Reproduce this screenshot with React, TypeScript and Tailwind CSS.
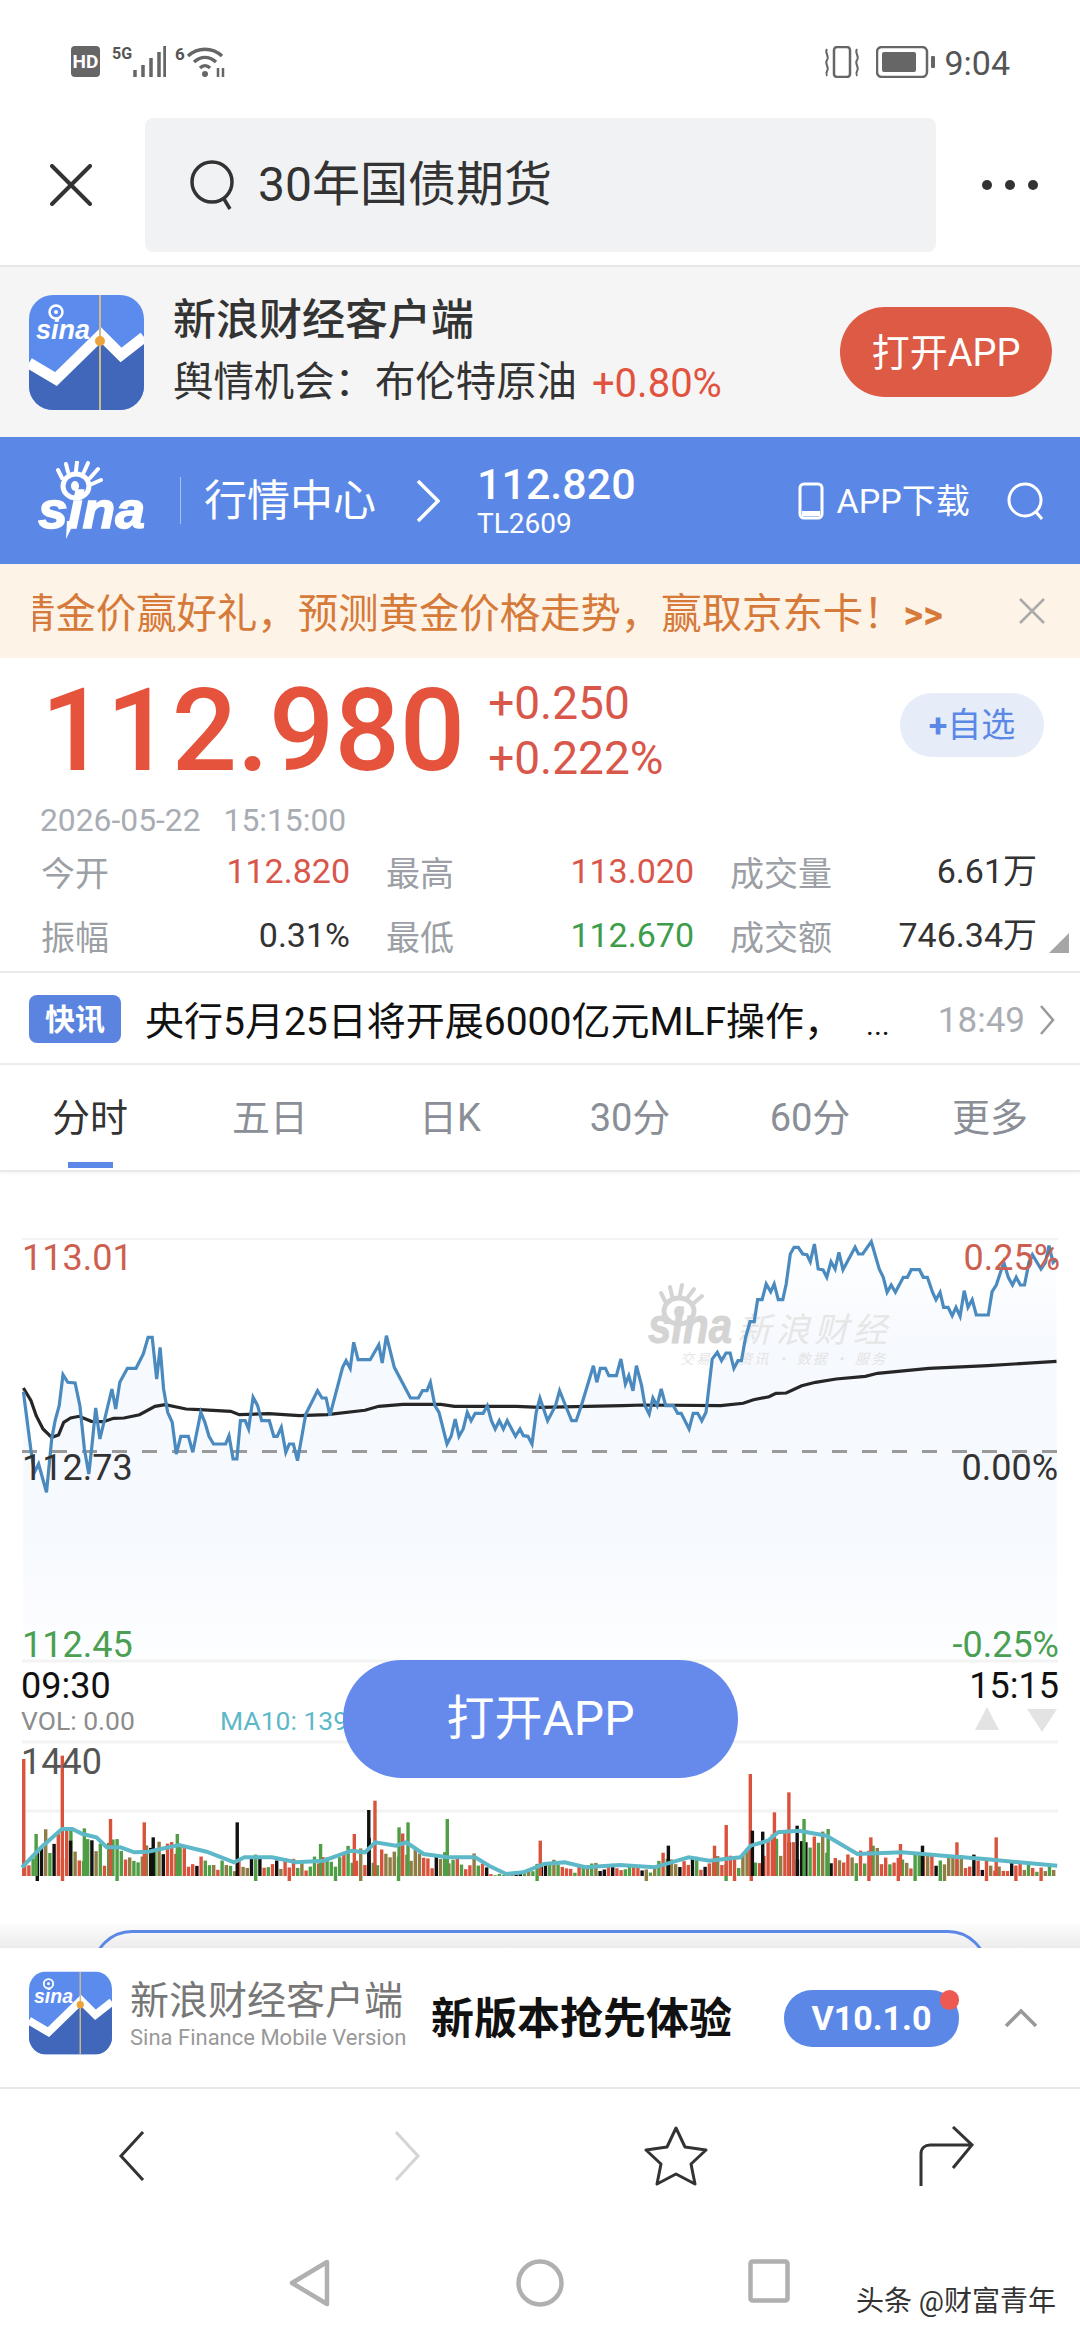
import React from "react";

const font = "font-['Roboto','Noto_Sans_CJK_SC',sans-serif]";

// chart points were read off zoomed crops: x scale 2.904, y scale 3
const leftPts = [68,548,90,725,100,790,112,765,135,850,150,690,160,635,172,590,183,497,197,520,218,522,232,590,245,720,258,795,268,700,278,597,290,690,325,540,336,600,348,520,370,478,395,478,416,435,430,385,442,385,455,510,465,415,475,540,487,610,500,640,512,735,525,682,547,682,560,730,583,610,595,640,607,682,620,705,655,705,665,680,677,750,688,750,698,635,712,635,722,660,735,565,748,590,760,635,782,635,795,682,805,682,817,655,830,730,840,705,852,705,864,755,888,615,922,545,935,567,947,567,958,620,995,475,1005,455,1017,478,1027,400,1040,452,1075,452,1100,407,1110,462,1122,380,1145,475,1192,567,1215,567,1227,545,1240,545,1250,520,1263,590,1275,610,1298,705,1310,682,1322,630,1333,682,1345,660,1357,610,1368,635,1380,613,1403,613,1415,590,1427,635,1438,660,1450,635,1462,660,1473,635,1497,682,1510,660,1520,680,1533,682,1545,705,1557,610,1568,567];
const rightPts = [22,635,45,590,57,545,78,600,92,635,105,635,120,590,155,470,165,520,175,478,190,478,200,500,222,500,235,450,248,525,258,500,270,545,280,470,295,530,305,590,317,615,328,567,340,590,352,540,365,590,387,590,400,613,410,613,433,660,445,613,458,613,470,635,482,610,500,450,515,430,527,455,540,432,552,432,563,478,575,455,585,455,597,385,610,338,622,338,632,272,645,272,657,225,670,248,680,225,692,272,705,272,715,225,727,135,738,115,750,115,763,135,775,137,785,158,797,105,808,180,822,183,833,205,845,158,857,180,868,130,880,182,915,115,925,135,937,135,962,98,985,180,997,205,1008,250,1020,228,1032,250,1055,205,1067,205,1078,182,1102,182,1113,205,1125,205,1140,250,1150,272,1162,250,1172,295,1185,295,1197,320,1208,295,1220,322,1232,245,1243,295,1255,272,1267,318,1302,318,1313,248,1325,228,1347,160,1360,205,1372,228,1383,205,1395,228,1407,228,1420,160,1430,137,1455,180,1468,160,1478,110,1490,160,1500,150];
const avgLeft = [68,537,90,575,105,620,125,660,150,685,170,678,185,640,205,627,230,622,265,637,300,638,330,628,360,627,405,617,450,592,480,587,540,600,580,602,670,607,695,617,780,614,870,620,950,617,1060,604,1100,592,1170,586,1280,586,1320,592,1500,592,1568,595];
const avgRight = [240,590,300,588,525,590,590,583,620,572,665,563,685,553,715,552,760,530,800,520,860,510,945,502,980,493,1130,478,1300,470,1500,457];
const maPts = [32,1165,60,1105,90,1050,105,1050,120,1065,140,1075,155,1105,175,1105,195,1120,215,1118,260,1098,300,1118,340,1150,355,1135,395,1135,430,1150,470,1145,510,1115,530,1120,545,1090,575,1100,590,1090,615,1125,650,1135,690,1135,710,1160,735,1185,760,1180,790,1155,820,1150,850,1165,900,1158,950,1165,1000,1135,1030,1145,1075,1135,1090,1100,1115,1085,1130,1060,1160,1055,1200,1070,1245,1125,1310,1120,1370,1130,1430,1140,1480,1150,1535,1160];
const tallBars: [number, number, string][] = [[32,840,"r"],[88,830,"r"],[158,1020,"r"],[207,1030,"r"],[220,1075,"k"],[255,1065,"g"],[342,1030,"k"],[533,993,"k"],[542,965,"r"],[590,1030,"g"],[577,1045,"g"],[647,1020,"g"],[463,1095,"g"],[512,1065,"r"],[782,1085,"r"],[968,1100,"k"],[1035,1100,"r"],[1052,1038,"r"],[1087,885,"r"],[1090,1055,"k"],[1105,1058,"k"],[1122,1000,"r"],[1143,940,"r"],[1155,1040,"k"],[1165,1020,"g"],[1200,1050,"g"],[1262,1075,"r"],[1305,1095,"r"],[1337,1100,"k"],[1387,1090,"r"],[1444,1075,"r"],[50,1065,"g"],[120,1048,"g"],[100,1085,"k"]];

const toPairs = (a: number[], fx: (n: number) => number, fy: (n: number) => number) => {
  const out: [number, number][] = [];
  for (let i = 0; i < a.length; i += 2) out.push([fx(a[i]), fy(a[i + 1])]);
  return out;
};
const lx = (n: number) => n / 2.904;
const rx = (n: number) => 540 + n / 2.904;
const cy = (n: number) => 1210 + n / 3;
const zx = (n: number) => n / 1.452;
const zy = (n: number) => 1480 + n / 3;

const price = [...toPairs(leftPts, lx, cy), ...toPairs(rightPts, rx, cy)];
const avg = [...toPairs(avgLeft, lx, cy), ...toPairs(avgRight, rx, cy)];
const ma = toPairs(maPts, zx, zy);
const line = (p: [number, number][]) => p.map((q) => q[0].toFixed(1) + "," + q[1].toFixed(1)).join(" ");

const colors: Record<string, string> = { r: "#d9533c", g: "#4f9d45", k: "#111111", o: "#8f7d45" };

const maAt = (x: number) => {
  for (let i = 1; i < ma.length; i++) {
    if (x <= ma[i][0]) return ma[i][1];
  }
  return 1877;
};

// small fixed random so the volume bars stay the same every run
let seed = 77;
const rnd = () => {
  seed = (seed * 16807) % 2147483647;
  return seed / 2147483647;
};
const bars: { x: number; top: number; c: string; bottom: number }[] = [];
for (let x = 23; x < 1054; x += 4.2) {
  const pick = rnd();
  const c = pick < 0.42 ? "r" : pick < 0.7 ? "g" : pick < 0.88 ? "o" : "k";
  const h = (1877 - maAt(x)) * (0.35 + rnd() * 0.95);
  bars.push({ x, top: 1877 - h, c, bottom: rnd() > 0.93 ? 1882 : 1877 });
}
tallBars.forEach((b) => bars.push({ x: zx(b[0]), top: zy(b[1]), c: b[2], bottom: 1877 }));

function AppIcon({ className }: { className: string }) {
  return (
    <svg viewBox="0 0 115 115" className={className}>
      <defs>
        <clipPath id="iconclip">
          <rect width="115" height="115" rx="24" />
        </clipPath>
      </defs>
      <g clipPath="url(#iconclip)">
        <rect width="115" height="115" fill="#5c8bee" />
        <path d="M0 74 L27 90 L72 46 L92 66 L115 48 L115 115 L0 115 Z" fill="#4067ba" />
        <path d="M0 68 L27 84 L72 40 L92 60 L115 42" fill="none" stroke="#ffffff" strokeWidth="11" />
        <rect x="70" width="2" height="115" fill="#cdbb8a" />
        <circle cx="71" cy="46" r="5" fill="#eda33b" />
        <text x="7" y="44" fill="#ffffff" fontSize="27" fontWeight="700" fontStyle="italic" fontFamily="Liberation Sans, sans-serif">sina</text>
        <circle cx="27" cy="17" r="6.5" fill="none" stroke="#ffffff" strokeWidth="2.5" />
        <circle cx="27" cy="17" r="2" fill="#ffffff" />
      </g>
    </svg>
  );
}

function SinaMark({ fill, className }: { fill: string; className: string }) {
  return (
    <svg viewBox="0 0 107 80" className={className}>
      <ellipse cx="38" cy="25" rx="13" ry="12" fill="none" stroke={fill} strokeWidth="5" />
      <ellipse cx="37" cy="25" rx="4" ry="5" fill={fill} />
      <path d="M24 17 L20 9 M30 11 L28 3 M38 10 L39 1 M46 11 L50 2 M52 17 L60 8 M54 23 L63 19" stroke={fill} strokeWidth="4" strokeLinecap="round" />
      <text x="0" y="67" fill={fill} stroke={fill} strokeWidth="1.5" fontSize="52" fontWeight="700" fontStyle="italic" fontFamily="Liberation Sans, sans-serif" textLength="107" lengthAdjust="spacingAndGlyphs">sina</text>
      <path d="M29 60 L28 78 L37 60 Z" fill={fill} />
    </svg>
  );
}

const Stat = ({ label, value, color }: { label: string; value: string; color: string }) => (
  <div className="flex items-center justify-between h-[64px]">
    <span className="text-[34px] text-[#9c9fa5] leading-none">{label}</span>
    <span className={`text-[34px] leading-none -translate-y-[3px] ${color}`}>{value}</span>
  </div>
);

const tabs = ["分时", "五日", "日K", "30分", "60分", "更多"];

export default function App() {
  return (
    <div className={`${font} w-[1080px] h-[2340px] bg-white flex flex-col overflow-hidden`}>
      {/* status bar */}
      <div className="h-[118px] flex items-start justify-between pt-[46px] pl-[71px] pr-[70px]">
        <div className="flex items-start">
          <div className="w-[29px] h-[31px] rounded-[4px] bg-[#666] text-white text-[19px] font-bold leading-[31px] text-center">HD</div>
          <span className="ml-[12px] text-[16px] font-bold text-[#555] leading-none">5G</span>
          <svg viewBox="0 0 34 32" className="w-[34px] h-[32px]">
            <path d="M3 31V24M11 31V19M19 31V12M27 31V6M33 31V0" stroke="#666" strokeWidth="3.5" />
          </svg>
          <span className="ml-[9px] text-[17px] font-bold text-[#555] leading-none">6</span>
          <svg viewBox="0 0 42 32" className="w-[42px] h-[32px]">
            <path d="M3 10C13 1 27 1 37 10M9 16C16 10 24 10 31 16M15 22C18 19 22 19 25 22" fill="none" stroke="#666" strokeWidth="3.5" />
            <circle cx="20" cy="28" r="3" fill="#666" />
            <path d="M33 22V31M38 22V31" stroke="#666" strokeWidth="2.5" />
          </svg>
        </div>
        <div className="flex items-start">
          <svg viewBox="0 0 38 32" className="w-[38px] h-[32px]">
            <rect x="11" y="1" width="16" height="30" rx="3" fill="none" stroke="#666" strokeWidth="2.5" />
            <path d="M4 3C1 7 7 10 4 14C1 18 7 21 4 25C3 27 3 28 4 30M34 3C31 7 37 10 34 14C31 18 37 21 34 25C33 27 33 28 34 30" fill="none" stroke="#666" strokeWidth="2" />
          </svg>
          <svg viewBox="0 0 60 32" className="ml-[15px] w-[60px] h-[32px]">
            <rect x="1" y="1" width="50" height="30" rx="5" fill="none" stroke="#666" strokeWidth="2.5" />
            <rect x="6" y="6" width="34" height="20" rx="2" fill="#666" />
            <rect x="55" y="10" width="4" height="12" rx="1" fill="#666" />
          </svg>
          <span className="ml-[8px] text-[34px] text-[#555] leading-[34px]">9:04</span>
        </div>
      </div>

      {/* browser search bar */}
      <div className="h-[149px] border-b-2 border-[#e6e6e6] flex pt-0">
        <div className="w-[145px] h-[134px] flex items-center pl-[50px]">
          <svg viewBox="0 0 42 42" className="w-[42px] h-[42px]">
            <path d="M2 2L40 40M40 2L2 40" stroke="#333" strokeWidth="4" strokeLinecap="round" />
          </svg>
        </div>
        <div className="w-[791px] h-[134px] rounded-[8px] bg-[#f1f2f4] flex items-center pl-[44px]">
          <svg viewBox="0 0 48 52" className="w-[48px] h-[52px]">
            <circle cx="23" cy="23" r="20" fill="none" stroke="#333" strokeWidth="3.5" />
            <path d="M35 40L41 50" stroke="#333" strokeWidth="3.5" />
          </svg>
          <span className="ml-[21px] text-[48px] text-[#333] leading-none">30年国债期货</span>
        </div>
        <div className="flex-1 h-[134px] flex items-center justify-center gap-[13px] pl-[3px] pb-[1px]">
          <span className="w-[10px] h-[10px] rounded-full bg-[#333]" />
          <span className="w-[10px] h-[10px] rounded-full bg-[#333]" />
          <span className="w-[10px] h-[10px] rounded-full bg-[#333]" />
        </div>
      </div>

      {/* app banner */}
      <div className="h-[170px] bg-[#f5f5f5] flex items-center pl-[29px] pr-[28px]">
        <AppIcon className="w-[115px] h-[115px]" />
        <div className="ml-[29px] flex flex-col -mt-[4px]">
          <span className="text-[43px] font-medium text-[#333] leading-[50px]">新浪财经客户端</span>
          <div className="flex items-center mt-[17px] h-[44px]">
            <span className="text-[40.4px] text-[#333] leading-none">舆情机会：布伦特原油</span>
            <span className="ml-[15px] text-[40px] text-[#e2533f] leading-none">+0.80%</span>
          </div>
        </div>
        <div className="ml-auto w-[212px] h-[90px] rounded-[45px] bg-[#dd5a44] text-white text-[38px] flex items-center justify-center pt-[3px]">打开APP</div>
      </div>

      {/* sina header */}
      <div className="h-[127px] bg-[#5b88e6] flex items-center text-white">
        <SinaMark fill="#ffffff" className="ml-[38px] w-[107px] h-[80px]" />
        <div className="ml-[35px] w-[1px] h-[47px] bg-[#a9c1f0]" />
        <span className="ml-[23px] text-[43px] leading-none mt-[2px]">行情中心</span>
        <svg viewBox="0 0 24 44" className="ml-[40px] w-[24px] h-[44px]">
          <path d="M2 2L22 22L2 42" fill="none" stroke="#fff" strokeWidth="3.5" />
        </svg>
        <div className="ml-[37px] flex flex-col">
          <span className="text-[43px] font-medium leading-[44px]">112.820</span>
          <span className="text-[28px] leading-[30px] mt-[3px]">TL2609</span>
        </div>
        <svg viewBox="0 0 26 38" className="ml-[162px] w-[26px] h-[38px]">
          <rect x="2" y="2" width="22" height="34" rx="4" fill="none" stroke="#fff" strokeWidth="3" />
          <path d="M4 29H22V34H4Z" fill="#fff" />
        </svg>
        <span className="ml-[13px] text-[34px] leading-none">APP下载</span>
        <svg viewBox="0 0 40 40" className="ml-[36px] w-[40px] h-[40px]">
          <circle cx="19" cy="19" r="16" fill="none" stroke="#fff" strokeWidth="3" />
          <path d="M30 31L36 38" stroke="#fff" strokeWidth="3" />
        </svg>
      </div>

      {/* notice strip */}
      <div className="h-[94px] bg-[#fdf3e7] flex items-center">
        <div className="ml-[33px] w-[915px] h-[60px] pt-[14px] overflow-hidden">
          <div className="-ml-[18px] flex items-center whitespace-nowrap text-[40.4px] leading-none text-[#d67a3a]">
            <span>猜金价赢好礼，预测黄金价格走势，赢取京东卡！</span>
            <span className="text-[38px] font-bold">&gt;&gt;</span>
          </div>
        </div>
        <svg viewBox="0 0 28 28" className="ml-[70px] w-[28px] h-[28px]">
          <path d="M2 2L26 26M26 2L2 26" stroke="#aaa" strokeWidth="2.5" />
        </svg>
      </div>

      {/* quote */}
      <div className="relative h-[315px] flex flex-col border-b-2 border-[#e9e9e9]">
        <div className="h-[133px] flex items-start pl-[41px] pr-[36px]">
          <span className="text-[115px] font-medium text-[#e5533d] leading-[114px] mt-[16px]">112.980</span>
          <div className="ml-[23px] mt-[22px] flex flex-col text-[#d9574a] leading-none">
            <span className="text-[46px]">+0.250</span>
            <span className="text-[46px] mt-[9px]">+0.222%</span>
          </div>
          <div className="ml-auto mt-[35px] w-[144px] h-[64px] rounded-[32px] bg-[#e6edf9] text-[#5b88e6] text-[34px] flex items-center justify-center">
            <b className="font-bold">+</b>自选
          </div>
        </div>
        <div className="mt-[12px] pl-[40px] flex gap-[23px] text-[31.8px] leading-[34px] text-[#a8acb3]">
          <span>2026-05-22</span>
          <span>15:15:00</span>
        </div>
        <div className="mt-[5px] pl-[41px] grid grid-cols-[309px_308px_307px] gap-x-[36px]">
          <Stat label="今开" value="112.820" color="text-[#d9574a]" />
          <Stat label="最高" value="113.020" color="text-[#d9574a]" />
          <Stat label="成交量" value="6.61万" color="text-[#333]" />
          <Stat label="振幅" value="0.31%" color="text-[#333]" />
          <Stat label="最低" value="112.670" color="text-[#3e9d4b]" />
          <Stat label="成交额" value="746.34万" color="text-[#333]" />
        </div>
        <svg viewBox="0 0 20 20" className="absolute right-[11px] bottom-[18px] w-[20px] h-[20px]">
          <path d="M20 0V20H0Z" fill="#a6a6a6" />
        </svg>
      </div>

      {/* news line */}
      <div className="h-[92px] border-b-2 border-[#ececec] flex items-center pl-[29px] pr-[25px] pt-[4px]">
        <div className="w-[92px] h-[48px] -mt-[2px] rounded-[8px] bg-[#5b84e0] text-white text-[30px] font-bold flex items-center justify-center">快讯</div>
        <span className="ml-[24px] mt-[4px] text-[39px] text-[#111] leading-none whitespace-nowrap">央行5月25日将开展6000亿元MLF操作，</span>
        <span className="ml-[23px] text-[30px] text-[#111] leading-none mt-[10px]">...</span>
        <span className="ml-auto text-[35px] text-[#a9adb3] leading-none">18:49</span>
        <svg viewBox="0 0 16 32" className="ml-[14px] w-[16px] h-[32px]">
          <path d="M2 2L14 16L2 30" fill="none" stroke="#999" strokeWidth="2.5" />
        </svg>
      </div>

      {/* period tabs */}
      <div className="h-[107px] grid grid-cols-6 border-b-2 border-[#e9e9e9] shadow-[0_2px_4px_rgba(0,0,0,0.04)]">
        {tabs.map((t, i) => (
          <div key={t} className="relative flex items-center justify-center">
            <span className={`text-[38px] leading-none mt-[1px] ${i === 0 ? "text-[#333]" : "text-[#8a8e96]"}`}>{t}</span>
            {i === 0 && <div className="absolute bottom-[2px] left-[68px] w-[45px] h-[6px] bg-[#5b88e6]" />}
          </div>
        ))}
      </div>

      {/* chart canvas */}
      <div className="relative flex-1 overflow-hidden">
        <svg viewBox="0 1173 1080 775" className="absolute left-0 top-0 w-[1080px] h-[775px]">
          <defs>
            <linearGradient id="area" x1="0" y1="0" x2="0" y2="1">
              <stop offset="0" stopColor="#ffffff" />
              <stop offset="0.25" stopColor="#f6f9fe" />
              <stop offset="0.7" stopColor="#f6f9fe" />
              <stop offset="1" stopColor="#fdfeff" />
            </linearGradient>
          </defs>
          <path d="M22 1240H1058" stroke="#f3f3f3" strokeWidth="2" />
          <polygon points={`${line(price)} 1057,1662 23,1662`} fill="url(#area)" />
          <path d="M22 1662H1058M22 1743H1058M22 1812H1058" stroke="#f3f3f3" strokeWidth="3" />
          <path d="M22 1452.5H1058" stroke="#9a9a9a" strokeWidth="3" strokeDasharray="15 15" />
          <SinaWatermark />
          <polyline points={line(avg)} fill="none" stroke="#262626" strokeWidth="3.2" />
          <polyline points={line(price)} fill="none" stroke="#4a8abf" strokeWidth="3.2" />
          {bars.map((b, i) => (
            <rect key={i} x={b.x} y={b.top} width="3.4" height={b.bottom - b.top} fill={colors[b.c]} />
          ))}
          <polyline points={line(ma)} fill="none" stroke="#5db8c8" strokeWidth="4" />
          <path d="M975 1731L987 1708L999 1731Z" fill="#e3e3e3" />
          <path d="M1027 1710L1057 1710L1042 1733Z" fill="#e3e3e3" />
        </svg>

        <span className="absolute left-[22px] top-[68px] text-[36px] leading-none text-[#cc5f4f]">113.01</span>
        <span className="absolute right-[20px] top-[68px] text-[36px] leading-none text-[#cc5f4f]">0.25%</span>
        <span className="absolute left-[22px] top-[278px] text-[36px] leading-none text-[#333]">112.73</span>
        <span className="absolute right-[22px] top-[278px] text-[36px] leading-none text-[#333]">0.00%</span>
        <span className="absolute left-[22px] top-[455px] text-[36px] leading-none text-[#4b9f52]">112.45</span>
        <span className="absolute right-[21px] top-[455px] text-[36px] leading-none text-[#4b9f52]">-0.25%</span>
        <span className="absolute left-[21px] top-[496px] text-[36px] leading-none text-[#111]">09:30</span>
        <span className="absolute right-[21px] top-[496px] text-[36px] leading-none text-[#111]">15:15</span>
        <span className="absolute left-[21px] top-[536px] text-[26.5px] leading-none text-[#8c8c8c]">VOL: 0.00</span>
        <span className="absolute left-[220px] top-[536px] text-[26.5px] leading-none text-[#5db8c8]">MA10: 139</span>
        <span className="absolute left-[21px] top-[572px] text-[36px] leading-none text-[#555]">1440</span>

        <div className="absolute left-[343px] top-[488px] w-[395px] h-[118px] rounded-[59px] bg-[#668aec] text-white text-[48px] flex items-center justify-center">打开APP</div>

        {/* next section peeking out under the bottom panel */}
        <div className="absolute left-0 bottom-0 w-[1080px] h-[25px] bg-gradient-to-b from-[#fdfdfd] to-[#ececec]" />
        <div className="absolute left-[92px] top-[758px] w-[896px] h-[80px] rounded-[60px] border-[3px] border-[#5b88e6]" />
      </div>

      {/* download panel */}
      <div className="relative h-[141px] bg-white border-b-2 border-[#e8e8e8] flex items-start pl-[29px]">
        <AppIcon className="mt-[23px] w-[83px] h-[84px]" />
        <div className="ml-[18px] mt-[32px] flex flex-col w-[276px]">
          <span className="text-[39px] text-[#777] leading-[42px] whitespace-nowrap">新浪财经客户端</span>
          <span className="text-[22px] text-[#999] leading-[24px] mt-[4px] whitespace-nowrap">Sina Finance Mobile Version</span>
        </div>
        <span className="ml-[25px] mt-[50px] text-[43px] font-bold text-[#111] leading-none whitespace-nowrap">新版本抢先体验</span>
        <div className="relative ml-[52px] mt-[42px] w-[175px] h-[57px] rounded-[28px] bg-[#5b88e6] text-white text-[34px] font-bold flex items-center justify-center">
          V10.1.0
          <span className="absolute right-0 top-0 w-[19px] h-[20px] rounded-full bg-[#ee5a52]" />
        </div>
        <svg viewBox="0 0 34 20" className="ml-[45px] mt-[60px] w-[34px] h-[20px]">
          <path d="M2 18L17 3L32 18" fill="none" stroke="#999" strokeWidth="3.5" />
        </svg>
      </div>

      {/* browser toolbar */}
      <div className="h-[140px] grid grid-cols-[1fr] bg-white">
        <div className="flex items-center pl-[118px] pb-[7px]">
          <svg viewBox="0 0 28 50" className="w-[28px] h-[50px]">
            <path d="M25 1L3 25L25 49" fill="none" stroke="#333" strokeWidth="3" />
          </svg>
          <svg viewBox="0 0 28 50" className="ml-[247px] w-[28px] h-[50px]">
            <path d="M3 1L25 25L3 49" fill="none" stroke="#d4d4d4" strokeWidth="3" />
          </svg>
          <svg viewBox="0 0 64 60" className="ml-[223px] w-[64px] h-[60px]">
            <path d="M32 2L41 21L62 24L47 38L51 58L32 48L13 58L17 38L2 24L23 21Z" fill="none" stroke="#333" strokeWidth="3" strokeLinejoin="round" />
          </svg>
          <svg viewBox="0 0 56 60" className="ml-[211px] w-[56px] h-[60px]">
            <path d="M2 60V28C2 22 6 19 11 19H53M34 1L53 19L34 42" fill="none" stroke="#333" strokeWidth="3" />
          </svg>
        </div>
      </div>

      {/* system nav */}
      <div className="relative flex-none h-[111px] flex items-start pl-[288px] pt-[30px]">
        <svg viewBox="0 0 42 48" className="w-[42px] h-[48px]">
          <path d="M39 3L4 24L39 45Z" fill="none" stroke="#b0b0b0" strokeWidth="4.5" strokeLinejoin="round" />
        </svg>
        <svg viewBox="0 0 48 48" className="ml-[186px] w-[48px] h-[48px]">
          <circle cx="24" cy="24" r="21.5" fill="none" stroke="#b0b0b0" strokeWidth="4.5" />
        </svg>
        <svg viewBox="0 0 42 44" className="ml-[184px] w-[42px] h-[44px]">
          <rect x="2.5" y="2.5" width="37" height="39" rx="2" fill="none" stroke="#b0b0b0" strokeWidth="4.5" />
        </svg>
        <span className="absolute right-[24px] top-[59px] text-[28px] text-[#333] leading-none">头条 @财富青年</span>
      </div>
    </div>
  );
}

function SinaWatermark() {
  return (
    <g fill="#d8d8d8">
      <ellipse cx="679" cy="1312" rx="15" ry="13" fill="none" stroke="#d4d4d4" strokeWidth="5" />
      <ellipse cx="679" cy="1313" rx="5" ry="6" fill="#d4d4d4" />
      <path d="M665 1302L661 1294M672 1297L670 1288M680 1296L682 1286M688 1298L694 1290M694 1304L702 1297" stroke="#d4d4d4" strokeWidth="4" strokeLinecap="round" />
      <text x="648" y="1344" fontSize="50" fontWeight="700" fontStyle="italic" fontFamily="Liberation Sans, sans-serif" fill="#d4d4d4" stroke="#d4d4d4" strokeWidth="1" textLength="84" lengthAdjust="spacingAndGlyphs">sina</text>
      <text x="737" y="1343" fontSize="34" fontStyle="italic" fontFamily="Noto Sans CJK SC, sans-serif" fill="#e6e6e6" textLength="150">新浪财经</text>
      <text x="680" y="1365" fontSize="14" fontFamily="Noto Sans CJK SC, sans-serif" fill="#e4e4e4" textLength="205" fontStyle="italic">交易 · 资讯 · 数据 · 服务</text>
    </g>
  );
}
